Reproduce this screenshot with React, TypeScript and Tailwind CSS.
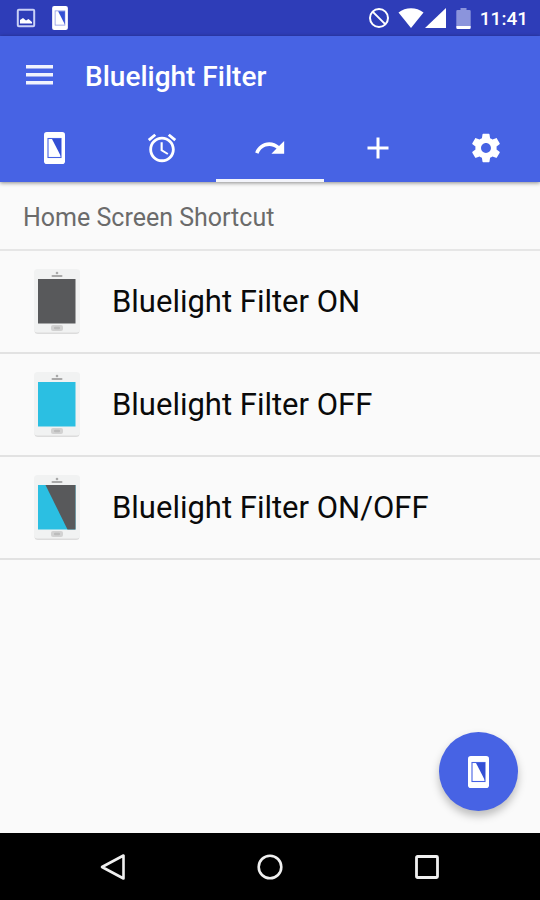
import React, { useState } from "react";

type DeviceMode = "on" | "off" | "both";

const PATHS = {
  alarm:
    "M22 5.72l-4.6-3.86-1.29 1.53 4.6 3.86L22 5.72zM7.88 3.39L6.6 1.86 2 5.71l1.29 1.53 4.59-3.85zM12.5 8H11v6l4.75 2.85.75-1.23-4-2.37V8zM12 4c-4.97 0-9 4.03-9 9s4.02 9 9 9c4.97 0 9-4.03 9-9s-4.03-9-9-9zm0 16c-3.87 0-7-3.13-7-7s3.13-7 7-7 7 3.13 7 7-3.13 7-7 7z",
  redo: "M18.4 10.6C16.55 8.99 14.15 8 11.5 8c-4.65 0-8.58 3.03-9.96 7.22L3.9 16c1.05-3.19 4.05-5.5 7.6-5.5 1.95 0 3.73.72 5.12 1.88L13 16h9V7l-3.6 3.6z",
  add: "M19 13h-6v6h-2v-6H5v-2h6V5h2v6h6v2z",
  settings:
    "M19.43 12.98c.04-.32.07-.64.07-.98s-.03-.66-.07-.98l2.11-1.65c.19-.15.24-.42.12-.64l-2-3.46c-.12-.22-.39-.3-.61-.22l-2.49 1c-.52-.4-1.08-.73-1.69-.98l-.38-2.65C14.46 2.18 14.25 2 14 2h-4c-.25 0-.46.18-.49.42l-.38 2.65c-.61.25-1.17.59-1.69.98l-2.49-1c-.23-.09-.49 0-.61.22l-2 3.46c-.13.22-.07.49.12.64l2.11 1.65c-.04.32-.07.65-.07.98s.03.66.07.98l-2.11 1.65c-.19.15-.24.42-.12.64l2 3.46c.12.22.39.3.61.22l2.49-1c.52.4 1.08.73 1.69.98l.38 2.65c.03.24.24.42.49.42h4c.25 0 .46-.18.49-.42l.38-2.65c.61-.25 1.17-.59 1.69-.98l2.49 1c.23.09.49 0 .61-.22l2-3.46c.12-.22.07-.49-.12-.64l-2.11-1.65zM12 15.5c-1.93 0-3.5-1.57-3.5-3.5s1.57-3.5 3.5-3.5 3.5 1.57 3.5 3.5-1.57 3.5-3.5 3.5z",
};

function Glyph({ d, className = "size-[34px]" }: { d: string; className?: string }) {
  return (
    <svg viewBox="0 0 24 24" className={className} fill="currentColor" aria-hidden="true">
      <path d={d} />
    </svg>
  );
}

function PhoneGlyph({ className, outline = "#4763e4" }: { className: string; outline?: string }) {
  return (
    <svg viewBox="0 0 21 32" className={className} aria-hidden="true">
      <rect width="21" height="32" rx="2.8" fill="#fff" />
      <rect x="4" y="6.5" width="13" height="19" fill="#fff" stroke={outline} strokeWidth="1.1" />
      <path d="M8 7h9v17.500z" fill="#3450d4" />
    </svg>
  );
}

function DeviceArt({ mode }: { mode: DeviceMode }) {
  return (
    <svg viewBox="0 0 46 65" className="h-[65px] w-[46px] shrink-0" aria-hidden="true">
      <rect x="0.5" y="1" width="45" height="64" rx="3.5" fill="#dcdcdc" />
      <rect x="0" y="0" width="46" height="63.5" rx="3.5" fill="#f1f2f2" />
      <circle cx="23" cy="4" r="1.3" fill="#a9a9a9" />
      <rect x="17.5" y="6" width="11" height="2" rx="1" fill="#a9a9a9" />
      <rect x="17" y="56" width="12" height="6" rx="2" fill="#d2d2d2" />
      <rect x="20" y="57.7" width="6" height="2.6" rx="1" fill="#bcbcbc" />
      <rect x="4" y="10" width="37.5" height="44.5" fill={mode === "on" ? "#58595b" : "#2bbfe2"} />
      {mode === "both" && <path d="M11.5 10h30v44.500h-8z" fill="#58595b" />}
    </svg>
  );
}

function StatusBar() {
  return (
    <div className="flex h-9 items-center bg-[#2e3db8] pr-3 pl-4 text-white">
      <svg viewBox="0 0 20 20" className="size-5" aria-hidden="true">
        <rect x="1.8" y="1.8" width="16.400" height="16.400" rx="1" fill="none" stroke="#c9d0f6" strokeWidth="2" />
        <path d="M4 15.5V12l3-2 3 2.500 2.500-1.500 3.500 3v1.500z" fill="#fff" />
      </svg>
      <PhoneGlyph className="ml-4 h-6 w-4" outline="#8f9be6" />
      <svg viewBox="0 0 22 22" className="ml-auto size-[22px]" fill="none" stroke="#fff" strokeWidth="2" aria-hidden="true">
        <circle cx="11" cy="11" r="9" />
        <path d="M4.6 4.6l12.8 12.8" />
      </svg>
      <svg viewBox="0 0 26 20" className="ml-2 h-5 w-[26px]" fill="#fff" aria-hidden="true">
        <path d="M0.5 4.5C7.5-1.2 18.5-1.2 25.5 4.5L13 20z" />
      </svg>
      <svg viewBox="0 0 21 20" className="ml-px h-5 w-[21px]" fill="#fff" aria-hidden="true">
        <path d="M21 0v20H0z" />
      </svg>
      <svg viewBox="0 0 15 21" className="ml-[10px] h-[21px] w-[15px]" aria-hidden="true">
        <path d="M4.500 0h6v2H13.500a1.200 1.200 0 0 1 1.200 1.200V18H0.300V3.200A1.200 1.200 0 0 1 1.500 2h3z" fill="#8b94dc" />
        <path d="M0.300 18h14.400v1.800a1.200 1.200 0 0 1-1.200 1.200h-12A1.200 1.200 0 0 1 0.300 19.800z" fill="#fff" />
      </svg>
      <span className="ml-[9px] pt-0.5 text-[19px] leading-6 font-medium">11:41</span>
    </div>
  );
}

const tabs: { name: string; icon: React.ReactNode }[] = [
  { name: "Filter", icon: <PhoneGlyph className="h-8 w-[21px]" /> },
  { name: "Schedule", icon: <Glyph d={PATHS.alarm} /> },
  { name: "Shortcut", icon: <Glyph d={PATHS.redo} /> },
  { name: "More", icon: <Glyph d={PATHS.add} className="size-9" /> },
  { name: "Settings", icon: <Glyph d={PATHS.settings} /> },
];

const shortcuts: { label: string; mode: DeviceMode }[] = [
  { label: "Bluelight Filter ON", mode: "on" },
  { label: "Bluelight Filter OFF", mode: "off" },
  { label: "Bluelight Filter ON/OFF", mode: "both" },
];

export default function App() {
  const [active, setActive] = useState(2);
  return (
    <div className="flex min-h-screen flex-col bg-[#fafafa] font-['Roboto',sans-serif]">
      <StatusBar />
      <header className="bg-[#4763e4] text-white shadow-[0_1px_4px_rgba(0,0,0,0.45)]">
        <div className="flex h-20 items-center gap-8 px-[26px]">
          <button type="button" aria-label="Open menu" className="flex pb-0.5">
            <svg viewBox="0 0 27 20" className="h-5 w-[27px]" fill="#f1f3fd" aria-hidden="true">
              <path d="M0 0h27v3.500H0zM0 8h27v3.500H0zM0 16h27v3.500H0z" />
            </svg>
          </button>
          <h1 className="pt-0.5 text-[28px] leading-8 font-medium">Bluelight Filter</h1>
        </div>
        <nav className="grid grid-cols-5" aria-label="Sections">
          {tabs.map((tab, i) => (
            <button
              key={tab.name}
              type="button"
              aria-label={tab.name}
              onClick={() => setActive(i)}
              className={
                "flex h-[66px] items-center justify-center border-b-[3px] " +
                (i === active ? "border-[#f3f4fb]" : "border-transparent")
              }
            >
              {tab.icon}
            </button>
          ))}
        </nav>
      </header>
      <main className="flex flex-1 flex-col">
        <h2 className="border-b-2 border-[#e6e6e6] px-[23px] pt-5 pb-[15px] text-[25px] leading-8 text-[#6b6b6b]">
          Home Screen Shortcut
        </h2>
        <ul>
          {shortcuts.map((s) => (
            <li key={s.label} className="border-b-2 border-[#e2e2e2]">
              <button type="button" className="flex w-full items-center gap-8 px-[34px] py-[18px] text-left">
                <DeviceArt mode={s.mode} />
                <span className="text-[31px] leading-9 text-[#0a0a0a]">{s.label}</span>
              </button>
            </li>
          ))}
        </ul>
        <div className="mt-auto flex justify-end px-[22px] pb-[22px]">
          <button
            type="button"
            aria-label="Toggle filter"
            className="flex size-[79px] items-center justify-center rounded-full bg-[#4763e4] shadow-[0_5px_8px_rgba(0,0,0,0.25)]"
          >
            <PhoneGlyph className="h-8 w-[21px]" />
          </button>
        </div>
      </main>
      <footer className="flex h-[67px] items-center justify-center gap-[131px] bg-black">
        <button type="button" aria-label="Back">
          <svg viewBox="0 0 26 26" className="size-[26px]" fill="none" stroke="#f0f0f0" strokeWidth="2.6" strokeLinejoin="round" aria-hidden="true">
            <path d="M23.500 1.500v23L2 13z" />
          </svg>
        </button>
        <button type="button" aria-label="Home">
          <svg viewBox="0 0 26 26" className="size-[26px]" fill="none" stroke="#f0f0f0" strokeWidth="2.6" aria-hidden="true">
            <circle cx="13" cy="13" r="11.300" />
          </svg>
        </button>
        <button type="button" aria-label="Recent apps">
          <svg viewBox="0 0 26 26" className="size-[26px]" fill="none" stroke="#f0f0f0" strokeWidth="2.8" aria-hidden="true">
            <rect x="2.500" y="2.500" width="21" height="21" rx="1" />
          </svg>
        </button>
      </footer>
    </div>
  );
}
